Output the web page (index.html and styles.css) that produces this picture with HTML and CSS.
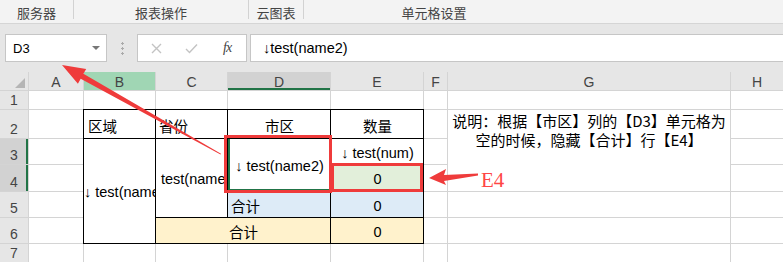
FILE: index.html
```html
<!DOCTYPE html>
<html lang="zh-CN">
<head>
  <meta charset="UTF-8">
  <meta name="viewport" content="width=device-width, initial-scale=1.0">
  <title>单元格设置</title>
  <link rel="stylesheet" href="styles.css">
</head>
<body>
  <div class="ribbon">
    <div class="group g-server">服务器</div>
    <div class="group g-report">报表操作</div>
    <div class="group g-cloud">云图表</div>
    <div class="group g-cell">单元格设置</div>
  </div>

  <div class="formula-bar">
    <div class="name-box"><span>D3</span><span class="caret"></span></div>
    <div class="grip"></div>
    <div class="tools">
      <svg class="tool t-cancel" width="11" height="11" viewBox="0 0 11 11"><path d="M1 1L10 10M10 1L1 10"/></svg>
      <svg class="tool t-ok" width="13" height="11" viewBox="0 0 13 11"><path d="M1 6L4.5 9.5L12 1.5"/></svg>
      <span class="tool t-fx">fx</span>
    </div>
    <div class="formula">↓test(name2)</div>
  </div>

  <div class="sheet">
    <!-- header row -->
    <div class="corner"><span class="tri"></span></div>
    <div class="hd">A</div>
    <div class="hd col-b">B</div>
    <div class="hd">C</div>
    <div class="hd on">D</div>
    <div class="hd">E</div>
    <div class="hd">F</div>
    <div class="hd">G</div>
    <div class="hd">H</div>

    <!-- row 1 -->
    <div class="rh">1</div>
    <div class="c"></div><div class="c"></div><div class="c"></div><div class="c"></div>
    <div class="c"></div><div class="c"></div><div class="c"></div><div class="c"></div>

    <!-- row 2 -->
    <div class="rh">2</div>
    <div class="c"></div>
    <div class="c t pl4">区域</div>
    <div class="c t">省份</div>
    <div class="c t ctr">市区</div>
    <div class="c t ctr">数量</div>
    <div class="c"></div>
    <div class="c note r3"><p>说明：根据【市区】列的【D3】单元格为<br>空的时候，隐藏【合计】行【E4】</p></div>
    <div class="c"></div>

    <!-- row 3 -->
    <div class="rh on">3</div>
    <div class="c"></div>
    <div class="c t r4 pl0">↓ test(name)</div>
    <div class="c t r3 pl5">test(name)</div>
    <div class="c t r2 ctr sel">↓ test(name2)</div>
    <div class="c t ctr">↓ test(num)</div>
    <div class="c"></div>
    <div class="c"></div>

    <!-- row 4 -->
    <div class="rh on">4</div>
    <div class="c"></div>
    <div class="c t ctr bg-green">0</div>
    <div class="c"></div>
    <div class="c"></div>

    <!-- row 5 -->
    <div class="rh">5</div>
    <div class="c"></div>
    <div class="c t bg-blue">合计</div>
    <div class="c t ctr bg-blue">0</div>
    <div class="c"></div>
    <div class="c"></div>
    <div class="c"></div>

    <!-- row 6 -->
    <div class="rh">6</div>
    <div class="c"></div>
    <div class="c t s2 ctr bg-yellow">合计</div>
    <div class="c t ctr bg-yellow">0</div>
    <div class="c"></div>
    <div class="c"></div>
    <div class="c"></div>

    <!-- row 7 -->
    <div class="rh">7</div>
    <div class="c"></div><div class="c"></div><div class="c"></div><div class="c"></div>
    <div class="c"></div><div class="c"></div><div class="c"></div><div class="c"></div>
  </div>

  <!-- hand-drawn annotations over the sheet -->
  <svg class="marks" width="783" height="262" viewBox="0 0 783 262">
    <polygon points="62,65 86.2,68.9 83.4,73.8 221,153.8 220.5,154.6 80.7,78.7 77.9,83.7"/>
    <rect class="box" x="225.5" y="136.5" width="105" height="55"/>
    <rect class="box" x="332.5" y="164.5" width="89" height="26"/>
    <polygon points="429,178 446,169 444,175 478,173.5 478,175.5 444,181 446,185"/>
    <text class="label" x="481" y="187">E4</text>
  </svg>
</body>
</html>
```

FILE: styles.css
```css
:root {
  --grid: #d4d4d4;
  --hdr: #e6e6e6;
  --hdr-on: #d2d2d2;
  --green: #217346;
  --red: #ef3b3b;
}
html, body {
  margin: 0; padding: 0;
}
body {
  width: 783px;
  height: 262px;
  overflow: hidden;
  position: relative;
  background: #e6e6e6;
  font-family: "Liberation Sans", "Noto Sans CJK SC", sans-serif;
  color: #000;
}

/* ribbon group labels */
.ribbon {
  display: flex;
  height: 23px;
  background: #f3f3f3;
  border-bottom: 1px solid #d5d5d5;
  font-family: "Noto Sans CJK SC", sans-serif;
  font-size: 13px;
  color: #444;
}
.group {
  height: 19px;
  padding-top: 6px;
  box-sizing: border-box;
  display: flex;
  align-items: center;
  justify-content: center;
  border-right: 1px solid #d2d2d2;
  line-height: 1;
}
.g-server { width: 74px; }
.g-report { width: 175px; }
.g-cloud { width: 55px; }
.g-cell { width: 260px; border-right: none; }

/* formula bar */
.formula-bar {
  display: flex;
  align-items: center;
  height: 48px;
  padding-left: 5px;
  box-sizing: border-box;
}
.name-box {
  width: 102px;
  height: 28px;
  box-sizing: border-box;
  background: #fff;
  border: 1px solid #c6c6c6;
  display: flex;
  align-items: center;
  justify-content: space-between;
  padding: 0 6px 0 7px;
  font-size: 13px;
}
.caret {
  width: 0;
  height: 0;
  border-left: 4px solid transparent;
  border-right: 4px solid transparent;
  border-top: 4px solid #777;
}
.grip {
  width: 3px;
  height: 14px;
  margin-left: 14px;
  background: radial-gradient(circle, #aaa 1px, transparent 1.4px) 0 0 / 3px 5px;
}
.tools {
  width: 110px;
  height: 28px;
  margin-left: 13px;
  box-sizing: border-box;
  background: #fff;
  border: 1px solid #c6c6c6;
  display: flex;
  align-items: center;
  padding-left: 13px;
}
.tool path {
  fill: none;
  stroke: #c3c3c3;
  stroke-width: 1.4;
}
.t-ok { margin-left: 23px; }
.t-fx {
  margin-left: 25px;
  font-family: "Liberation Serif", serif;
  font-style: italic;
  font-size: 14px;
  color: #444;
  letter-spacing: -1px;
}
.formula {
  flex: 1;
  height: 28px;
  margin: 0 -1px 0 3px;
  box-sizing: border-box;
  background: #fff;
  border: 1px solid #c6c6c6;
  display: flex;
  align-items: center;
  padding-left: 12px;
  font-size: 14.5px;
}

/* sheet grid: gaps show the grid lines */
.sheet {
  display: grid;
  grid-template-columns: 28px 54px 71px 71px 102px 92px 23px 282px 1fr;
  grid-template-rows: 18px 18px 28px 25px 26px 25px 25px 1fr;
  gap: 1px;
  height: 190px;
  background: var(--grid);
}
.corner {
  background: var(--hdr);
  display: flex;
  justify-content: flex-end;
  align-items: flex-end;
  padding: 0 3px 2px 0;
}
.tri {
  width: 0;
  height: 0;
  border-left: 10px solid transparent;
  border-bottom: 10px solid #b5b5b5;
}
.hd {
  background: var(--hdr);
  display: flex;
  align-items: center;
  justify-content: center;
  padding-top: 2px;
  font-size: 14px;
  color: #444;
}
.hd.col-b { background: #a0d6b4; }
.hd.on {
  background: var(--hdr-on);
  box-shadow: inset 0 -2px 0 var(--green);
}
.rh {
  background: var(--hdr);
  display: flex;
  align-items: flex-end;
  justify-content: center;
  padding-bottom: 2px;
  font-size: 14px;
  line-height: 14px;
  color: #444;
}
.rh.on {
  background: var(--hdr-on);
  box-shadow: inset -2px 0 0 var(--green);
}
.c {
  background: #fff;
  display: flex;
  align-items: center;
  padding: 2px 2px 0 3px;
  min-width: 0;
  overflow: hidden;
  white-space: nowrap;
  font-size: 14.5px;
}
.ctr { justify-content: center; }
.pl0 { padding-left: 0; }
.pl4 { padding-left: 4px; }
.pl5 { padding-left: 5px; }
.r2 { grid-row: span 2; }
.r3 { grid-row: span 3; }
.r4 { grid-row: span 4; }
.s2 { grid-column: span 2; }

/* bordered report table */
.t { box-shadow: 0 0 0 1px #000; }
.t.sel {
  box-shadow: 0 0 0 1px #000, inset 0 -2px 0 var(--green), inset 2px 0 0 var(--green);
}
.bg-green { background: #e2efda; }
.bg-blue { background: #ddebf7; }
.bg-yellow { background: #fff2cc; }

.note {
  align-items: flex-start;
  justify-content: center;
  padding: 1px 0 0;
  white-space: normal;
}
.note p {
  margin: 0;
  text-align: center;
  font-family: "Noto Sans CJK SC", sans-serif;
  font-size: 15px;
  line-height: 19px;
}

/* annotations */
.marks {
  position: absolute;
  top: 0;
  left: 0;
  pointer-events: none;
}
.marks polygon { fill: var(--red); }
.marks .box {
  fill: none;
  stroke: var(--red);
  stroke-width: 3;
}
.marks .label {
  font-family: "Liberation Serif", serif;
  font-size: 21px;
  fill: #ff4646;
}
```
